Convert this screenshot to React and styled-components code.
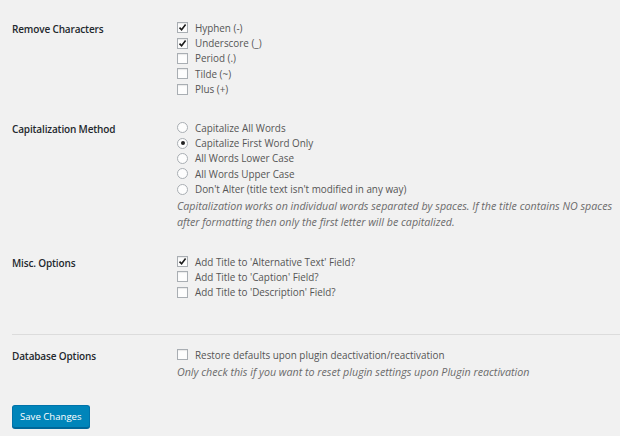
import React from "react";
import styled, { createGlobalStyle } from "styled-components";

const Global = createGlobalStyle`
  html, body { margin: 0; padding: 0; background: #f1f1f1; }
  body { font-family: "Open Sans", "Noto Sans", sans-serif; -webkit-font-smoothing: antialiased; }
`;

const Page = styled.div`
  width: 620px;
  height: 436px;
  box-sizing: border-box;
  padding: 20px 0 0 12px;
  overflow: hidden;
`;

const Section = styled.div`
  display: flex;
  align-items: flex-start;
  margin-top: ${(p) => p.$mt || 0}px;
`;

const Label = styled.div`
  width: 165px;
  flex: none;
  padding-top: 2px;
  font-size: 10px;
  letter-spacing: -0.15px;
  line-height: 15.4px;
  font-weight: 600;
  color: #23282d;
`;

const Field = styled.div`
  display: flex;
  flex-direction: column;
`;

const Option = styled.label`
  display: flex;
  align-items: center;
  gap: 7px;
  height: 15.4px;
  font-size: 9.9px;
  color: #555;
  white-space: nowrap;
`;

const Box = styled.span`
  width: 9px;
  height: 9px;
  flex: none;
  border: 1px solid #a9aeb3;
  background: #fdfdfd;
  box-shadow: inset 0 1px 1px rgba(0, 0, 0, 0.08);
  display: flex;
  align-items: center;
  justify-content: center;
`;

const Round = styled.span`
  width: 9px;
  height: 9px;
  flex: none;
  border-radius: 50%;
  border: 1px solid #a9aeb3;
  background: #fdfdfd;
  display: flex;
  align-items: center;
  justify-content: center;
  &::after {
    content: "";
    width: 4px;
    height: 4px;
    border-radius: 50%;
    background: ${(p) => (p.$on ? "#222" : "transparent")};
  }
`;

const Desc = styled.p`
  margin: ${(p) => p.$mt ?? 1}px 0 0;
  font-size: 10.7px;
  line-height: 16px;
  font-style: italic;
  color: #6b6b6b;
  white-space: nowrap;
`;

const Rule = styled.hr`
  border: 0;
  border-top: 1px solid #dcdcdc;
  margin: 34px 0 0;
`;

const Button = styled.button`
  margin-top: 25px;
  height: 23px;
  padding: 0 7px;
  font-family: inherit;
  font-size: 9.6px;
  color: #fff;
  background: #0085ba;
  border: 1px solid #0073aa;
  border-bottom-color: #006799;
  border-radius: 3px;
  box-shadow: 0 1px 0 #006799;
  cursor: pointer;
`;

const Check = () => (
  <svg width="9" height="9" viewBox="0 0 9 9">
    <path d="M1.5 4.6 L3.6 6.8 L7.6 1.6" fill="none" stroke="#1b1b1b" strokeWidth="1.6" />
  </svg>
);

const CheckOpt = ({ on, children }) => (
  <Option>
    <Box>{on && <Check />}</Box>
    {children}
  </Option>
);

const RadioOpt = ({ on, children }) => (
  <Option>
    <Round $on={on} />
    {children}
  </Option>
);

export default function App() {
  return (
    <Page>
      <Global />
      <Section>
        <Label>Remove Characters</Label>
        <Field>
          <CheckOpt on>Hyphen (-)</CheckOpt>
          <CheckOpt on>Underscore (_)</CheckOpt>
          <CheckOpt>Period (.)</CheckOpt>
          <CheckOpt>Tilde (~)</CheckOpt>
          <CheckOpt>Plus (+)</CheckOpt>
        </Field>
      </Section>
      <Section $mt={23}>
        <Label>Capitalization Method</Label>
        <Field>
          <RadioOpt>Capitalize All Words</RadioOpt>
          <RadioOpt on>Capitalize First Word Only</RadioOpt>
          <RadioOpt>All Words Lower Case</RadioOpt>
          <RadioOpt>All Words Upper Case</RadioOpt>
          <RadioOpt>Don't Alter (title text isn't modified in any way)</RadioOpt>
          <Desc>
            Capitalization works on individual words separated by spaces. If the title contains NO spaces
            <br />
            after formatting then only the first letter will be capitalized.
          </Desc>
        </Field>
      </Section>
      <Section $mt={24}>
        <Label>Misc. Options</Label>
        <Field>
          <CheckOpt on>Add Title to 'Alternative Text' Field?</CheckOpt>
          <CheckOpt>Add Title to 'Caption' Field?</CheckOpt>
          <CheckOpt>Add Title to 'Description' Field?</CheckOpt>
        </Field>
      </Section>
      <Rule />
      <Section $mt={12}>
        <Label>Database Options</Label>
        <Field>
          <CheckOpt>Restore defaults upon plugin deactivation/reactivation</CheckOpt>
          <Desc $mt={2}>Only check this if you want to reset plugin settings upon Plugin reactivation</Desc>
        </Field>
      </Section>
      <Button>Save Changes</Button>
    </Page>
  );
}
